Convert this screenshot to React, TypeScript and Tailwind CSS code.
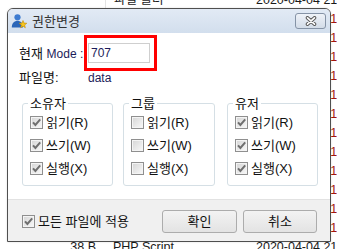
import React from "react";

function Box({ checked }: { checked: boolean }) {
  return (
    <span className="relative flex h-[13px] w-[13px] shrink-0 items-center justify-center border border-[#8f8f8f] bg-[#f4f4f4]">
      <span className="absolute inset-[1px] bg-gradient-to-br from-[#d8d8d8] to-[#f6f6f6]" />
      {checked && (
        <svg className="relative" width="11" height="11" viewBox="0 0 11 11">
          <path d="M2 5.3 L4.4 8 L9.2 2.4" fill="none" stroke="#6f6f6f" strokeWidth="2" />
        </svg>
      )}
    </span>
  );
}

function Group({ title, checked, className }: { title: string; checked: boolean; className: string }) {
  const rows = ["읽기(R)", "쓰기(W)", "실행(X)"];
  return (
    <div className={`relative h-[83px] rounded-[3px] border border-[#d5dfe5] ${className}`}>
      <span className="absolute -top-[8px] left-[5px] bg-white px-[2px] text-[13px] leading-[15px]">{title}</span>
      <div className="flex flex-col pl-[7px] pt-[7px]">
        {rows.map((r) => (
          <div key={r} className="flex h-[23px] items-center gap-[3px]">
            <Box checked={checked} />
            <span className="text-[13px] leading-none">{r}</span>
          </div>
        ))}
      </div>
    </div>
  );
}

export default function App() {
  const bgRows = Array.from({ length: 14 }, (_, i) => i);
  return (
    <div className="relative h-[249px] w-[337px] overflow-hidden bg-white font-['Liberation_Sans','Noto_Sans_CJK_KR',sans-serif] text-[#111]">
      {/* background file list */}
      <div className="-mt-[9px] flex flex-col text-[12.5px]">
        {bgRows.map((i) => {
          const plain = i === 0 || i === 13;
          return (
            <div key={i} className={`flex h-[19px] items-center whitespace-nowrap ${plain ? "text-[#1a1a1a]" : "text-[#a3140c]"}`}>
              <div className="w-[105px] shrink-0 pr-[9px] text-right">{i === 13 ? "38 B" : ""}</div>
              <div className={`w-[147px] shrink-0 pl-[8px] ${i === 0 ? "border-l border-[#e3e3e3]" : ""}`}>
                {i === 0 ? "파일 폴더" : i === 13 ? "PHP Script" : ""}
              </div>
              <div className="shrink-0 pl-[4px]">2020-04-04 21:15</div>
            </div>
          );
        })}
      </div>

      {/* dialog */}
      <div className="absolute left-[7px] top-[8px] flex h-[234px] w-[324px] flex-col overflow-hidden rounded-t-[6px] border border-[#4f4f4f] bg-white shadow-[0_0_2px_rgba(0,0,0,0.15)]">
        {/* title bar */}
        <div className="flex h-[24px] shrink-0 items-center bg-gradient-to-b from-[#e2eaf5] to-[#d2deed] pl-[3px]">
          <svg width="16" height="16" viewBox="0 0 16 16">
            <circle cx="6.5" cy="4.3" r="3.1" fill="#3d7bd0" />
            <path d="M0.8 14.5 C0.8 9.6 3.5 8 6.5 8 C9.5 8 12 9.6 12 14.5 Z" fill="#2c66b8" />
            <path
              d="M12 7.5 L13 10.12 L15.8 10.26 L13.62 12.03 L14.35 14.74 L12 13.2 L9.65 14.74 L10.38 12.03 L8.2 10.26 L11 10.12 Z"
              fill="#f7c51a"
              stroke="#c58b00"
              strokeWidth="0.6"
            />
          </svg>
          <span className="ml-[5px] text-[13px] leading-none text-[#333]">권한변경</span>
          <div className="ml-auto mr-[4px] flex h-[16px] w-[31px] items-center justify-center rounded-[3px] border border-[#8593a6] bg-gradient-to-b from-[#eef2f8] to-[#d3dce8]">
            <svg width="12" height="10" viewBox="0 0 12 10">
              <path d="M2.5 1.8 L9.5 8.2 M9.5 1.8 L2.5 8.2" stroke="#5b5b5b" strokeWidth="3.6" strokeLinecap="round" />
              <path d="M2.5 1.8 L9.5 8.2 M9.5 1.8 L2.5 8.2" stroke="#ffffff" strokeWidth="1.6" strokeLinecap="round" />
            </svg>
          </div>
        </div>

        {/* body */}
        <div className="flex flex-1 flex-col bg-white pl-[11px]">
          <div className="mt-[2px] flex h-[36px] items-center">
            <span className="w-[65px] text-[13px] leading-none">
              현재 <span className="text-[12px] text-[#1c1c5a]">Mode :</span>
            </span>
            <div className="flex h-[36px] w-[73px] items-center border-[3px] border-[#ff0000] pl-[1px]">
              <div className="flex h-[20px] w-[62px] items-center border border-[#cfcfcf] bg-white pl-[2px] text-[12px] leading-none text-[#1c1c5a]">
                707
              </div>
            </div>
          </div>
          <div className="flex h-[13px] items-center">
            <span className="w-[69px] text-[13px] leading-none">파일명:</span>
            <span className="text-[12px] leading-none text-[#1c1c5a]">data</span>
          </div>
          <div className="ml-[3px] mt-[19px] flex">
            <Group title="소유자" checked={true} className="w-[91px]" />
            <Group title="그룹" checked={false} className="ml-[10px] w-[92px]" />
            <Group title="유저" checked={true} className="ml-[12px] w-[91px]" />
          </div>
        </div>

        {/* footer */}
        <div className="flex h-[42px] shrink-0 items-center border-t border-[#e2e2e2] bg-[#f0f0f0] pl-[14px] pr-[13px] pt-[2px]">
          <Box checked={true} />
          <span className="ml-[3px] text-[13px] leading-none">모든 파일에 적용</span>
          <div className="ml-auto flex gap-[6px]">
            <div className="flex h-[23px] w-[75px] items-center justify-center rounded-[3px] border border-[#acacac] bg-gradient-to-b from-[#f3f3f3] to-[#e3e3e3] text-[13px] leading-none">
              확인
            </div>
            <div className="flex h-[23px] w-[74px] items-center justify-center rounded-[3px] border border-[#acacac] bg-gradient-to-b from-[#f3f3f3] to-[#e3e3e3] text-[13px] leading-none">
              취소
            </div>
          </div>
        </div>
      </div>
    </div>
  );
}
